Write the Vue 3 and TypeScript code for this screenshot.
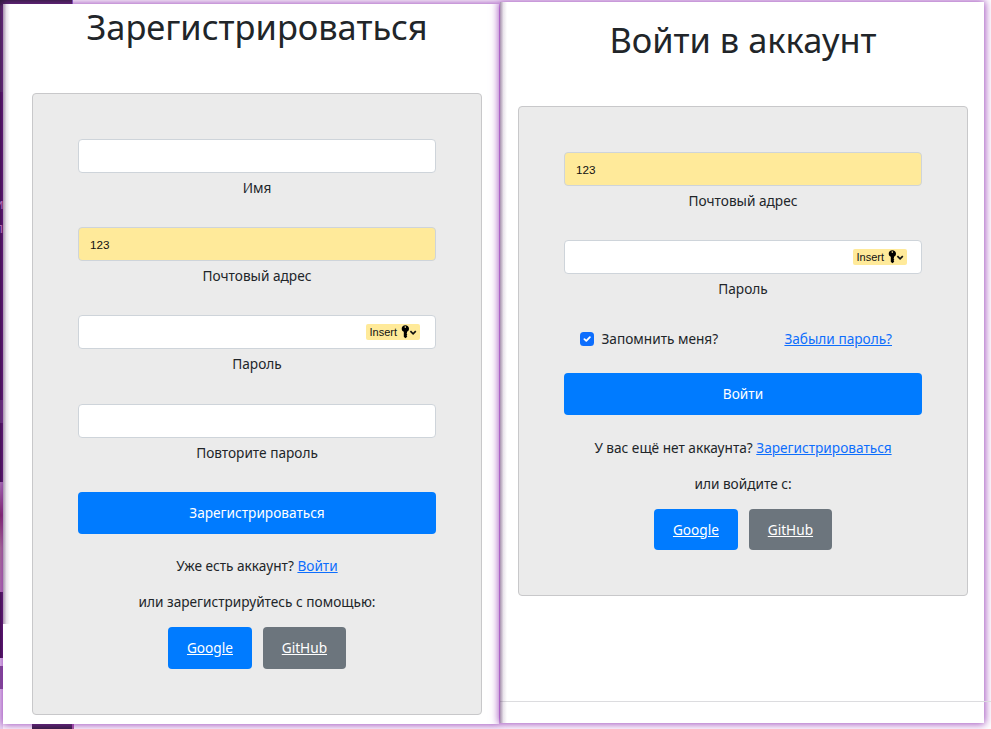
<script setup lang="ts">
interface Field {
  id: string
  label: string
  value?: string
  insert?: boolean
}

interface AuthWindow {
  id: string
  title: string
  fields: Field[]
  remember: boolean
  submit: string
  question: string
  link: string
  hint: string
}

const windows: AuthWindow[] = [
  {
    id: 'register',
    title: 'Зарегистрироваться',
    fields: [
      { id: 'name', label: 'Имя' },
      { id: 'email', label: 'Почтовый адрес', value: '123' },
      { id: 'password', label: 'Пароль', insert: true },
      { id: 'repeat', label: 'Повторите пароль' },
    ],
    remember: false,
    submit: 'Зарегистрироваться',
    question: 'Уже есть аккаунт?',
    link: 'Войти',
    hint: 'или зарегистрируйтесь с помощью:',
  },
  {
    id: 'login',
    title: 'Войти в аккаунт',
    fields: [
      { id: 'email', label: 'Почтовый адрес', value: '123' },
      { id: 'password', label: 'Пароль', insert: true },
    ],
    remember: true,
    submit: 'Войти',
    question: 'У вас ещё нет аккаунта?',
    link: 'Зарегистрироваться',
    hint: 'или войдите с:',
  },
]
</script>

<template>
  <div class="desktop">
    <div class="backdrop">
      <span class="code code-a">и</span>
      <span class="code code-b">л</span>
      <span class="band band-a"></span>
      <span class="photo"></span>
      <span class="band-light"></span>
      <span class="band band-b"></span>
    </div>
    <div class="corner corner-top"></div>
    <div class="corner corner-bottom"></div>

    <section v-for="win in windows" :key="win.id" class="window" :class="win.id">
      <h1>{{ win.title }}</h1>
      <form class="card" @submit.prevent>
        <div v-for="field in win.fields" :key="field.id" class="field">
          <div class="control" :class="{ filled: field.value }">
            <input :id="`${win.id}-${field.id}`" type="text" :value="field.value ?? ''" />
            <span v-if="field.insert" class="insert">
              <span>Insert</span>
              <svg width="18" height="14" viewBox="0 0 18 14">
                <path
                  fill-rule="evenodd"
                  d="M4.3 0.2C2.2 0.2 .7 1.7 .7 3.7c0 1.5.8 2.6 2.1 3.1V11.7L4.3 13.3l2-1.5-.7-1 .7-1-.7-1 .4-.7V6.8C7.2 6.3 8 5.2 8 3.7 8 1.7 6.4.2 4.3.2ZM4.3 1.3a.8.8 0 1 1 0 1.6.8.8 0 0 1 0-1.6Z"
                />
                <path d="M9.4 6.2 12.1 8.8l2.7-2.6" fill="none" stroke="#111" stroke-width="1.7" />
              </svg>
            </span>
          </div>
          <label :for="`${win.id}-${field.id}`">{{ field.label }}</label>
        </div>

        <div v-if="win.remember" class="options">
          <label class="remember">
            <span class="check">
              <svg width="14" height="14" viewBox="0 0 14 14">
                <path d="m4.4 7.1 1.9 1.8 3.6-3.7" fill="none" stroke="#fff" stroke-width="1.8" stroke-linecap="round" stroke-linejoin="round" />
              </svg>
            </span>
            Запомнить меня?
          </label>
          <a href="#">Забыли пароль?</a>
        </div>

        <button class="submit" type="submit">{{ win.submit }}</button>
        <p class="question">{{ win.question }} <a href="#">{{ win.link }}</a></p>
        <p class="hint">{{ win.hint }}</p>
        <div class="social">
          <a class="google" href="#">Google</a>
          <a class="github" href="#">GitHub</a>
        </div>
      </form>
      <footer v-if="win.id === 'login'"></footer>
    </section>
  </div>
</template>

<style>
body {
  margin: 0;
  overflow: hidden;
}
</style>

<style scoped>
* {
  box-sizing: border-box;
}

.desktop {
  position: relative;
  width: 991px;
  height: 729px;
  overflow: hidden;
  background: #fff;
  font: 13.65px/21.6px 'Noto Sans', sans-serif;
  color: #212529;
}

.backdrop {
  position: absolute;
  left: 0;
  top: 0;
  width: 3px;
  height: 729px;
  background: linear-gradient(#34213c 0 92px, #2a0634 92px);
  overflow: hidden;
}

.backdrop span {
  position: absolute;
  left: 0;
  width: 3px;
}

.backdrop .code {
  left: -5px;
  width: auto;
  color: #c08bb4;
  font-size: 14px;
}

.code-a {
  top: 193px;
}

.code-b {
  top: 217px;
}

.band-a {
  top: 389px;
  height: 23px;
  background: #4b2e58;
}

.photo {
  top: 482px;
  height: 90px;
  background: linear-gradient(#a982ad, #762650 30%, #a77c85 60%, #b17caa);
}

.band-light {
  top: 635px;
  height: 94px;
  background: #ead8f2;
}

.band-b {
  top: 643px;
  height: 23px;
  background: #79508b;
}

.corner {
  position: absolute;
  background: #2d1c38;
}

.corner-top {
  left: 0;
  top: 0;
  width: 73px;
  height: 5px;
  border-right: 1px solid #7662ba;
}

.corner-bottom {
  left: 32px;
  top: 723px;
  width: 42px;
  height: 6px;
  border-right: 2px solid #a45aa0;
}

/* The photo strip ends lower than its gradient, next to the dark footer band. */
.photo {
  height: 110px;
}

.band-light {
  top: 658px;
  height: 71px;
}

.band-b {
  top: 666px;
}

.band-a {
  top: 400px;
}

.window {
  position: absolute;
  display: flex;
  flex-direction: column;
  background: #fff;
  box-shadow: 0 0 8px 1px rgba(140, 40, 175, 0.85);
}

.register {
  left: 3px;
  top: 4px;
  width: 496px;
  height: 720px;
  padding: 1px 17px 0 29px;
}

.login {
  left: 500px;
  top: 2px;
  width: 484px;
  height: 721px;
  padding: 16px 16px 0 18px;
}

.register::before,
.login::before {
  content: '';
  position: absolute;
  left: 0;
  top: 0;
  width: 7px;
  height: 100%;
  background: linear-gradient(90deg, rgba(78, 35, 92, 0.5), rgba(78, 35, 92, 0.12) 50%, transparent);
}

.register::before {
  height: 620px;
}

h1 {
  margin: 0 0 45px;
  height: 43px;
  font-size: 34.4px;
  line-height: 43px;
  font-weight: 400;
  text-align: center;
  white-space: nowrap;
}

.card {
  display: flex;
  flex-direction: column;
  padding: 45px;
  border: 1px solid #c8c8ca;
  border-radius: 4px;
  background: #ebebeb;
}

.register .card {
  height: 622px;
}

.login .card {
  height: 490px;
}

.field {
  display: flex;
  flex-direction: column;
  height: 88.2px;
  text-align: center;
}

.field > label {
  margin-top: 4px;
}

.control {
  display: flex;
  align-items: center;
  height: 34px;
  padding: 0 15px 0 11px;
  border: 1px solid #ced4da;
  border-radius: 4px;
  background: #fff;
}

.login .control {
  padding-right: 14px;
}

.filled {
  background: #ffea9a;
}

input {
  flex: 1;
  min-width: 0;
  padding: 1px 0 0;
  border: 0;
  outline: 0;
  background: transparent;
  color: #111;
  font: 11.7px 'Liberation Sans', sans-serif;
}

.insert {
  display: flex;
  align-items: center;
  gap: 4px;
  width: 54px;
  height: 16px;
  padding-left: 3.5px;
  border-radius: 2px;
  background: #ffea9a;
  color: #111;
  font: 11px/16px 'Liberation Sans', sans-serif;
}

.insert svg {
  flex: none;
}

a {
  color: #0d6efd;
  text-decoration: underline;
}

.options {
  display: flex;
  justify-content: space-between;
  height: 44.6px;
  padding: 0 30px 0 16px;
}

.remember {
  display: flex;
  gap: 7.5px;
}

.check {
  width: 14px;
  height: 14px;
  margin-top: 3.6px;
  border-radius: 3.5px;
  background: #0d6efd;
}

.check svg {
  display: block;
}

.submit {
  flex: none;
  height: 42px;
  padding: 0;
  border: 0;
  border-radius: 4px;
  background: #007bff;
  color: #fff;
  font: inherit;
}

.question {
  margin: 21.6px 0 14.4px;
  text-align: center;
}

.login .question {
  margin-top: 22.4px;
}

.hint {
  margin: 0 0 14px;
  text-align: center;
}

.social {
  display: flex;
  justify-content: center;
  gap: 10.4px;
}

.social a {
  height: 41.5px;
  padding: 0 19.2px;
  border-radius: 4px;
  color: #fff;
  line-height: 42px;
}

.register .social a {
  height: 42px;
}

.google {
  background: #007bff;
}

.github {
  background: #6c757d;
}

footer {
  width: 491px;
  margin: 105px 0 0 -18px;
  border-top: 1px solid #dcdcdf;
}
</style>
